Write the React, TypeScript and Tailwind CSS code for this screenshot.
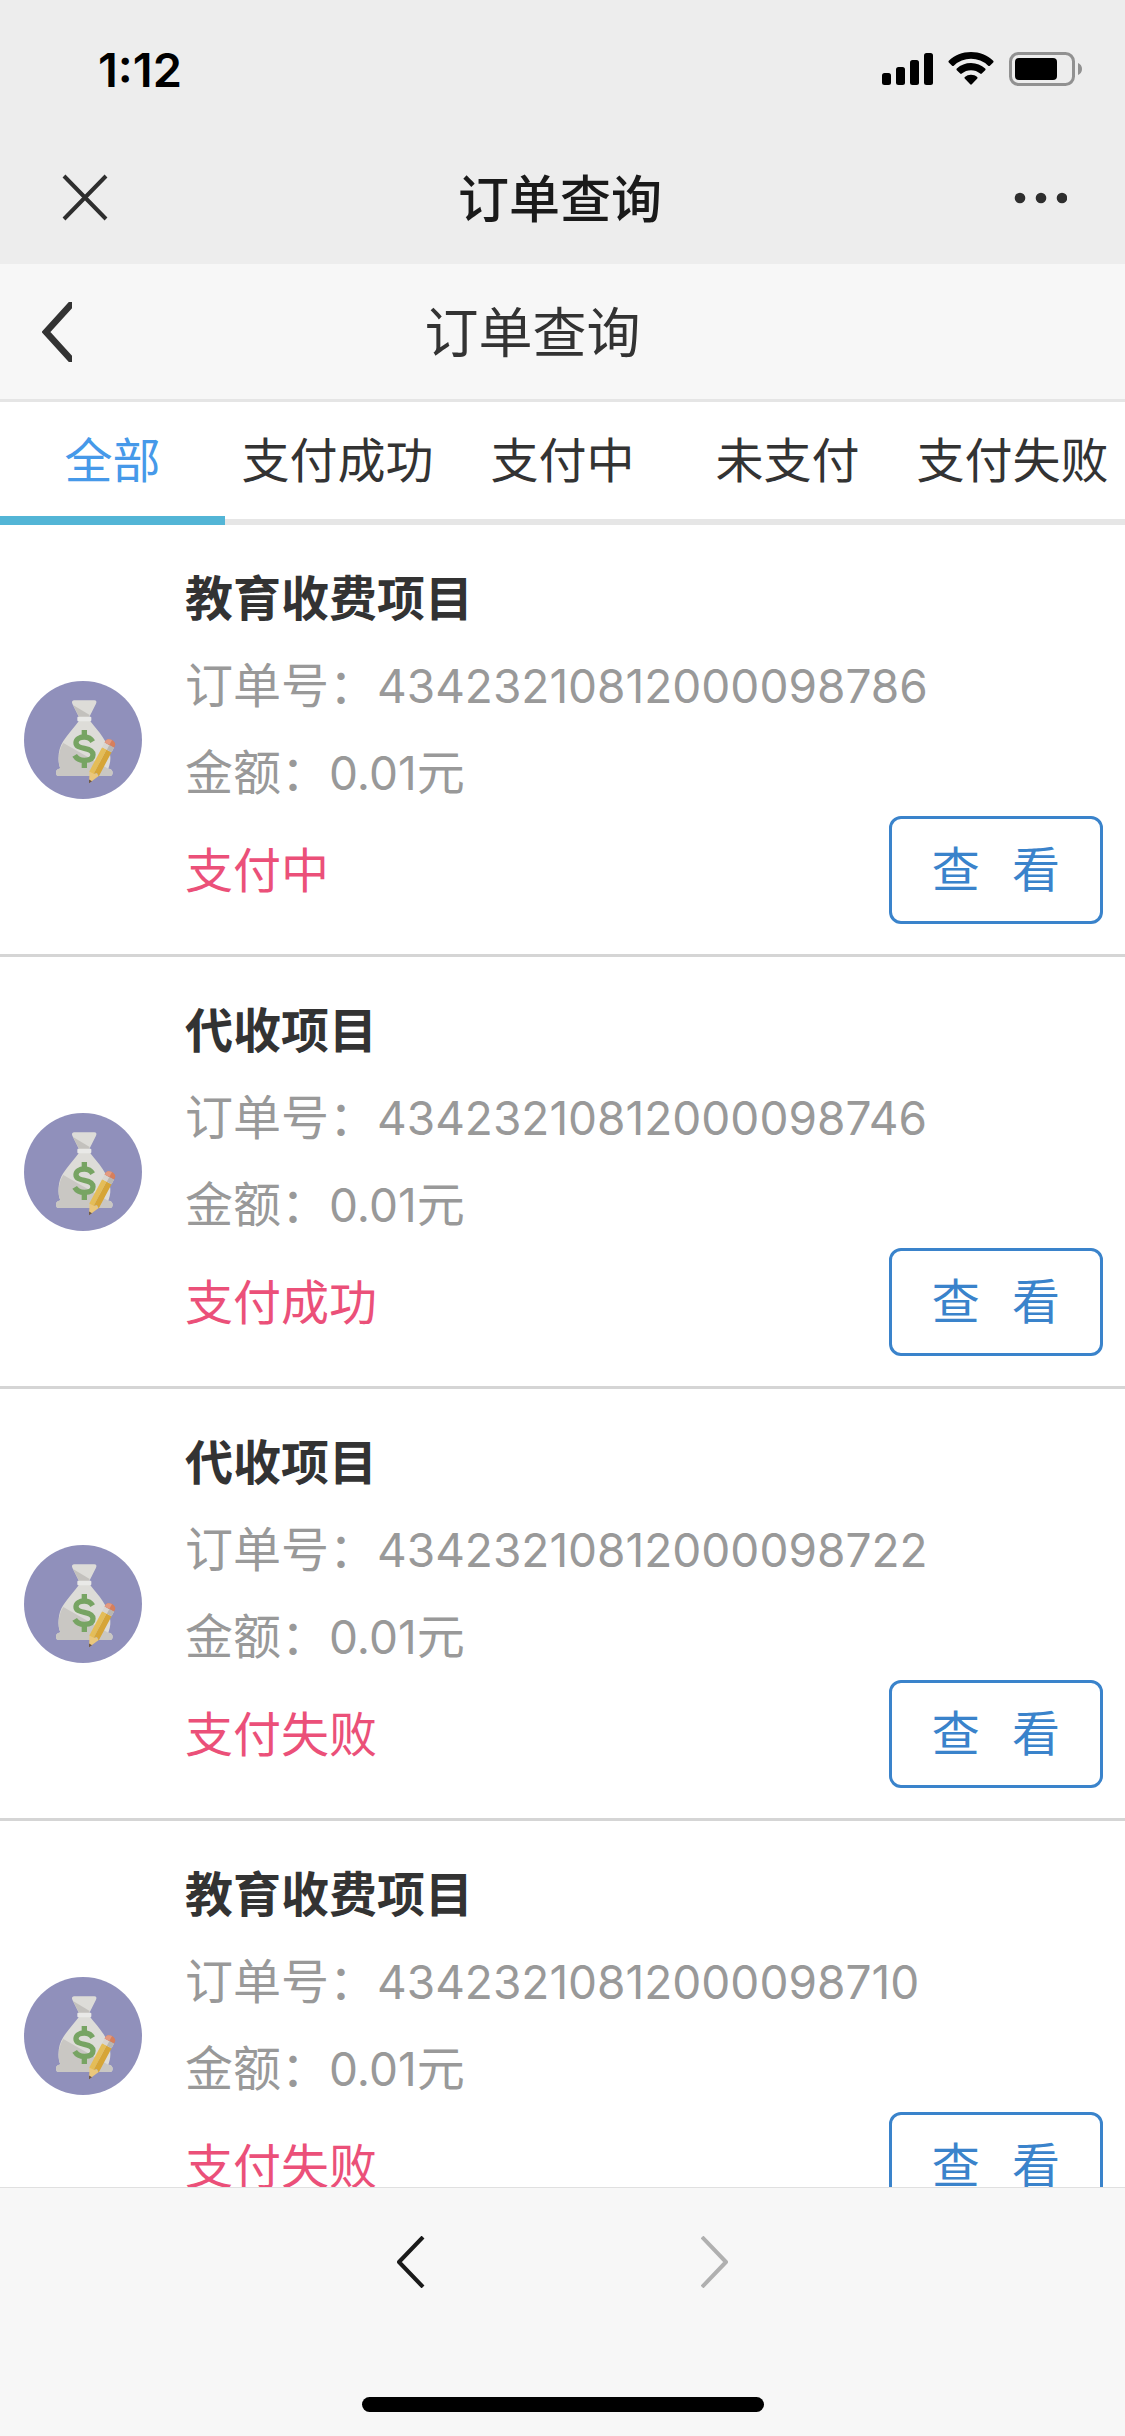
import { useState } from "react";

const tabs = ["全部", "支付成功", "支付中", "未支付", "支付失败"];

const orders = [
  { id: "43423210812000098786", name: "教育收费项目", amount: "0.01", status: "支付中" },
  { id: "43423210812000098746", name: "代收项目", amount: "0.01", status: "支付成功" },
  { id: "43423210812000098722", name: "代收项目", amount: "0.01", status: "支付失败" },
  { id: "43423210812000098710", name: "教育收费项目", amount: "0.01", status: "支付失败" },
];

const StatusBar = () => (
  <div className="flex h-[132px] items-center justify-between pt-1.5 pr-[43px] pl-[98px]">
    <span className="font-['Inter',sans-serif] text-[47px] leading-none font-semibold text-black">1:12</span>
    <svg className="h-[34px] w-[200px]" viewBox="882 52 200 34" aria-hidden="true">
      <rect x="882" y="73" width="9" height="12" rx="2.5" />
      <rect x="896" y="67" width="9" height="18" rx="2.5" />
      <rect x="910" y="60" width="9" height="25" rx="2.5" />
      <rect x="924" y="53" width="9" height="32" rx="2.5" />
      {/* wifi */}
      <path d="M971 52c8.600 0 16.400 3.300 22.200 8.700.5.500.5 1.200 0 1.700l-3.300 3.300c-.5.500-1.200.5-1.700 0a25 25 0 0 0-34.400 0c-.5.500-1.200.5-1.700 0l-3.300-3.300c-.5-.5-.5-1.200 0-1.700C954.600 55.300 962.400 52 971 52z" />
      <path d="M971 63c5.500 0 10.400 2.100 14.200 5.500.5.500.5 1.200 0 1.700l-3.400 3.400c-.4.400-1.100.5-1.600 0a14 14 0 0 0-18.400 0c-.5.500-1.200.4-1.600 0l-3.400-3.400c-.5-.5-.5-1.200 0-1.700A21 21 0 0 1 971 63z" />
      <path d="M971 74.800c2.400 0 4.600.8 6.200 2.200.5.500.5 1.100.1 1.600l-5.500 5.700c-.5.500-1.100.5-1.600 0l-5.500-5.700c-.4-.5-.4-1.100.1-1.600a9.500 9.500 0 0 1 6.200-2.200z" />
      {/* battery */}
      <rect x="1010.500" y="53.500" width="63" height="31" rx="8" fill="none" stroke="#919191" strokeWidth="3" />
      <rect x="1015" y="58" width="42" height="22" rx="4" />
      <path d="M1078 63c2.500 1 4 3.300 4 6s-1.500 5-4 6z" fill="#919191" />
    </svg>
  </div>
);

const MoneyBag = () => (
  <svg className="h-[118px] w-[118px] shrink-0" viewBox="42 33 354 354" aria-hidden="true">
    <circle cx="219" cy="210" r="177" fill="#9090bb" />
    {/* bag */}
    <path d="M193 91h60c6 0 8 5 5 10l-20 40h-31l-20-40c-3-5 0-10 6-10z" fill="#dddcd8" />
    <path d="M189 105l50 30-2 6h-30z" fill="#c3c1bd" />
    <path d="M207 152h33c24 31 58 64 61 108 1 15-3 27-6 36 9 0 13 5 13 12 0 6-3 10-8 10H146c-5 0-8-4-8-10 0-7 4-11 13-13-9-18-8-58 9-82 14-22 34-43 47-61z" fill="#dddcd8" />
    <path d="M160 219l135 77c9 0 13 5 13 12 0 6-3 10-8 10H146c-5 0-8-4-8-10 0-7 4-11 13-13-8-18-7-54 9-76z" fill="#c9c7c3" />
    <rect x="202" y="140" width="42" height="14" rx="3" fill="#e9e9e7" />
    {/* dollar sign */}
    <g fill="none" stroke="#77a463" strokeWidth="16">
      <path d="M223 180v18M223 274v20" />
      <path d="M248 215c-5-9-13-14-25-14-15 0-25 7-25 17 0 11 10 14 25 17s26 7 26 19-11 17-26 17c-13 0-23-5-29-15" />
    </g>
    {/* pencil */}
    <g transform="translate(237 340) rotate(28)">
      <path d="M0 0l-16-34h32z" fill="#eac77c" />
      <path d="M0 0l-5-10H5z" fill="#6b5545" />
      <path d="M-16-32h15v-82h-15z" fill="#e4bd58" />
      <path d="M-1-32l8-6 9 6v-82H-1z" fill="#d6a537" />
      <path d="M-16-114h32v-16h-32z" fill="#d8d5d0" />
      <path d="M0-114h16v-16H0z" fill="#b9b7b2" />
      <path d="M-16-130v-5c0-8 7-12 16-12s16 4 16 12v5z" fill="#d67f5c" />
      <path d="M-16-130v-5c0-8 7-12 16-12v17z" fill="#e39a80" />
    </g>
  </svg>
);

const OrderRow = ({ order }: { order: (typeof orders)[number] }) => (
  <li className="flex items-center border-b-3 border-[#d5d5d5] pr-[22px] pl-6">
    <MoneyBag />
    <div className="ml-[43px] flex-1 pt-[27px] pb-[30px]">
      <h2 className="leading-[87px] font-bold text-[#333]">{order.name}</h2>
      <p className="leading-[87px] text-[#999]">
        订单号：<span className="font-['Inter',sans-serif] text-[46px] leading-none">{order.id}</span>
      </p>
      <p className="leading-[87px] text-[#999]">
        金额：<span className="font-['Inter',sans-serif] text-[46px] leading-none">{order.amount}</span>元
      </p>
      <div className="mt-[3px] flex items-center justify-between">
        <span className="pb-1.5 text-[#eb5079]">{order.status}</span>
        <button className="h-[108px] rounded-xl border-3 border-[#3a83cb] px-10 pb-2 leading-none text-[#3a83cb]">
          查&nbsp;&nbsp;&nbsp;看
        </button>
      </div>
    </div>
  </li>
);

export default function App() {
  const [active, setActive] = useState(0);

  return (
    <div className="flex h-screen flex-col bg-white font-['Noto_Sans_CJK_SC',sans-serif] text-5xl" lang="zh-CN">
      <header className="shrink-0 bg-[#ededed]">
        <StatusBar />
        <div className="flex h-[132px] items-center justify-between pr-[58px] pl-[57px]">
          <button aria-label="关闭">
            <svg className="h-14 w-14" viewBox="0 0 56 56" fill="none" stroke="#2e2e2e" strokeWidth="4">
              <path d="M7 6l42 43M49 6L7 49" />
            </svg>
          </button>
          <h1 className="pb-1 text-[51px] leading-none font-medium text-[#1a1a1a]">订单查询</h1>
          <button aria-label="更多">
            <svg className="h-14 w-[60px]" viewBox="0 0 60 56" fill="#2e2e2e">
              <circle cx="13" cy="28" r="5.300" />
              <circle cx="34" cy="28" r="5.300" />
              <circle cx="55" cy="28" r="5.300" />
            </svg>
          </button>
        </div>
      </header>

      <div className="flex h-[138px] shrink-0 items-center border-b-3 border-[#e5e5e5] bg-[#f7f7f7] pr-[60px]">
        <button className="w-0 pl-[42px]" aria-label="返回">
          <svg className="h-[60px] w-[30px]" viewBox="0 0 30 60" fill="none" stroke="#333" strokeWidth="6.500">
            <path d="M33-2L4 30l29 32" />
          </svg>
        </button>
        <p className="flex-1 pr-[42px] pb-1 text-center text-[54px] leading-none text-[#333]">订单查询</p>
      </div>

      <nav className="grid h-[123px] shrink-0 grid-cols-5">
        {tabs.map((tab, index) => (
          <button
            key={tab}
            onClick={() => setActive(index)}
            className={
              index === active
                ? "border-b-9 border-[#53b5d6] pb-1 whitespace-nowrap text-[#4699e9]"
                : "border-b-6 border-[#e6e6e6] pb-[7px] whitespace-nowrap text-[#333]"
            }
          >
            {tab}
          </button>
        ))}
      </nav>

      <ul className="min-h-0 flex-1 overflow-y-auto [scrollbar-width:none]">
        {orders.map((order) => (
          <OrderRow key={order.id} order={order} />
        ))}
      </ul>

      {/* browser toolbar */}
      <footer className="flex h-[249px] shrink-0 flex-col items-center justify-between border-t border-[#e0e0e0] bg-[#f7f7f7] pt-12 pb-6">
        <div className="flex gap-[276px]">
          <button aria-label="后退">
            <svg className="h-[52px] w-7" viewBox="0 0 28 52" fill="none" stroke="#1a1a1a" strokeWidth="4" strokeLinejoin="round">
              <path d="M26 1L2 26l24 25" />
            </svg>
          </button>
          <button aria-label="前进">
            <svg className="h-[52px] w-7" viewBox="0 0 28 52" fill="none" stroke="#b0b0b0" strokeWidth="4" strokeLinejoin="round">
              <path d="M1 1l24 25L1 51" />
            </svg>
          </button>
        </div>
        <div className="h-[15px] w-[402px] rounded-full bg-black" />
      </footer>
    </div>
  );
}
